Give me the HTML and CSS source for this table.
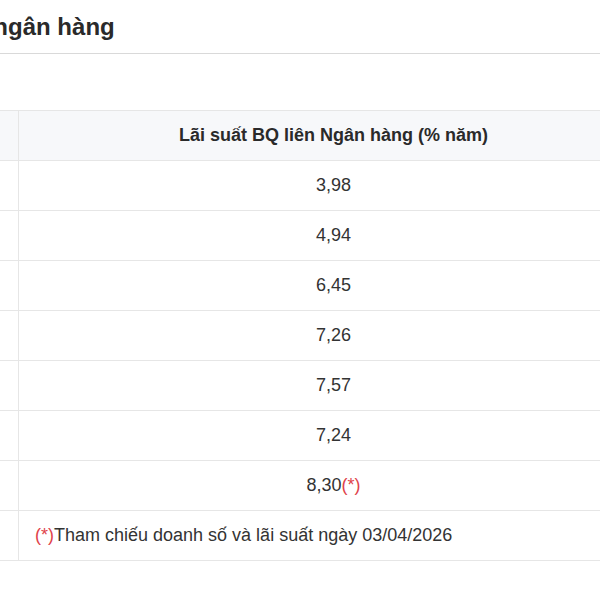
FILE: index.html
```html
<!DOCTYPE html>
<html lang="vi">
<head>
<meta charset="utf-8">
<link rel="stylesheet" href="styles.css">
</head>
<body>
<div class="card">
  <div class="card-head">
    <h2 class="title">Lãi suất liên ngân hàng</h2>
  </div>
  <div class="card-body">
    <table class="rates">
      <thead>
        <tr><th class="c-term">Kỳ hạn</th><th class="c-rate">Lãi suất BQ liên Ngân hàng (% năm)</th></tr>
      </thead>
      <tbody>
        <tr><td class="c-term">Qua đêm</td><td class="c-rate">3,98</td></tr>
        <tr><td class="c-term">1 Tuần</td><td class="c-rate">4,94</td></tr>
        <tr><td class="c-term">2 Tuần</td><td class="c-rate">6,45</td></tr>
        <tr><td class="c-term">1 Tháng</td><td class="c-rate">7,26</td></tr>
        <tr><td class="c-term">3 Tháng</td><td class="c-rate">7,57</td></tr>
        <tr><td class="c-term">6 Tháng</td><td class="c-rate">7,24</td></tr>
        <tr><td class="c-term">9 Tháng</td><td class="c-rate">8,30<span class="star">(*)</span></td></tr>
        <tr class="note-row"><td class="c-term"></td><td class="c-note"><span class="star">(*)</span>Tham chiếu doanh số và lãi suất ngày 03/04/2026</td></tr>
      </tbody>
    </table>
  </div>
</div>
</body>
</html>
```

FILE: styles.css
```css
html, body {
  margin: 0;
  padding: 0;
  background: #fff;
  overflow: hidden;
}
body {
  width: 600px;
  height: 600px;
  font-family: "Liberation Sans", Arial, sans-serif;
  color: #333;
}
.card {
  margin-left: -182px;
  width: 860px;
}
.card-head {
  height: 53px;
  border-bottom: 1px solid #d9d9d9;
  display: flex;
  align-items: center;
  padding-left: 30px;
}
.title {
  margin: 0;
  font-size: 24px;
  font-weight: bold;
  color: #2a2a2a;
}
.card-body {
  padding-top: 56px;
}
.rates {
  border-collapse: collapse;
  width: 830px;
  table-layout: fixed;
}
.rates th, .rates td {
  height: 49px;
  border-top: 1px solid #e6e6e6;
  border-bottom: 1px solid #e6e6e6;
  font-size: 18px;
  padding: 0;
}
.rates .c-term {
  width: 184px;
  border-right: 1px solid #e6e6e6;
  text-align: left;
  padding-left: 16px;
}
.rates th {
  background: #f7f8fa;
  font-weight: bold;
  color: #2a2a2a;
}
.rates .c-rate {
  text-align: center;
}
.rates .c-note {
  text-align: left;
  padding-left: 16px;
}
.star {
  color: #e0434b;
}
```
